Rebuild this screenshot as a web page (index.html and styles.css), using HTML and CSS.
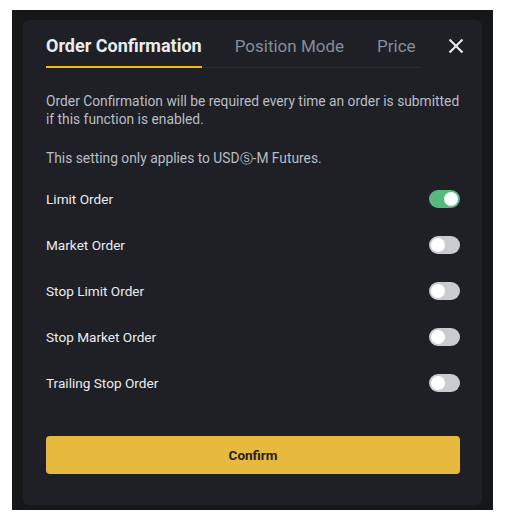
FILE: index.html
```html
<!DOCTYPE html>
<html>
<head>
<meta charset="utf-8">
<link rel="stylesheet" href="styles.css">
</head>
<body>
<div class="backdrop">
  <div class="modal">
    <div class="header">
      <div class="tabs">
        <div class="tab active">Order Confirmation</div>
        <div class="tab">Position Mode</div>
        <div class="tab">Price</div>
      </div>
      <button class="close" aria-label="Close">
        <svg width="16" height="16" viewBox="0 0 16 16"><path d="M1.5 1.5L14.5 14.5M14.5 1.5L1.5 14.5" stroke="#eaecef" stroke-width="2" fill="none"/></svg>
      </button>
    </div>
    <p class="desc first">Order Confirmation will be required every time an order is submitted if this function is enabled.</p>
    <p class="desc second">This setting only applies to USD<span class="circ">Ⓢ</span>-M Futures.</p>
    <div class="rows">
      <div class="row"><span>Limit Order</span><span class="toggle on"></span></div>
      <div class="row"><span>Market Order</span><span class="toggle"></span></div>
      <div class="row"><span>Stop Limit Order</span><span class="toggle"></span></div>
      <div class="row"><span>Stop Market Order</span><span class="toggle"></span></div>
      <div class="row"><span>Trailing Stop Order</span><span class="toggle"></span></div>
    </div>
    <button class="confirm">Confirm</button>
  </div>
</div>
</body>
</html>
```
FILE: styles.css
```css
* { box-sizing: border-box; }
html, body { margin: 0; padding: 0; background: #ffffff; }
body { font-family: Roboto, "Noto Sans", sans-serif; }
.backdrop {
  margin: 10px 0 0 12px;
  width: 481px;
  height: 500px;
  background: #161719;
  padding: 10px 0 0 11px;
}
.modal {
  width: 459px;
  height: 485px;
  background: #1f2025;
  border-radius: 6px;
  padding: 14px 22px 0 23px;
}
.header {
  display: flex;
  align-items: flex-start;
}
.tabs {
  display: flex;
  gap: 33px;
  width: 374px;
  overflow: hidden;
  white-space: nowrap;
  box-shadow: inset 0 -1px 0 #2b2e35;
}
.tab {
  font-size: 17px;
  line-height: 24px;
  color: #848e9c;
  padding-bottom: 8px;
  border-bottom: 2px solid transparent;
}
.tab.active {
  font-size: 18px;
  color: #eaecef;
  font-weight: 700;
  border-bottom-color: #f0b90b;
}
.close {
  margin-left: auto;
  margin-right: -8px;
  margin-top: 0;
  width: 24px;
  height: 24px;
  padding: 0;
  border: 0;
  background: transparent;
  display: flex;
  align-items: center;
  justify-content: center;
}
.desc {
  margin: 0;
  height: auto;
  font-size: 13.8px;
  line-height: 18px;
  color: #b7bdc6;
}
.circ { font-size: 12.5px; line-height: 0; }
.desc.first { margin-top: 24px; }
.desc.second { margin-top: 21px; height: 18px; }
.rows { margin-top: 9px; }
.row {
  height: 46px;
  display: flex;
  align-items: center;
  justify-content: space-between;
  font-size: 13.6px;
  color: #eaecef;
}
.toggle {
  position: relative;
  width: 31px;
  height: 18px;
  border-radius: 9px;
  background: #c9cbcf;
}
.toggle::after {
  content: "";
  position: absolute;
  top: 2px;
  left: 2px;
  width: 14px;
  height: 14px;
  border-radius: 50%;
  background: #ffffff;
}
.toggle.on { background: #58b97f; }
.toggle.on::after { left: 15px; }
.confirm {
  display: block;
  width: 414px;
  height: 38px;
  margin-top: 30px;
  border: 0;
  border-radius: 4px;
  background: #e8b93f;
  color: #1e2026;
  font-family: Roboto, "Noto Sans", sans-serif;
  font-weight: 700;
  font-size: 13.5px;
}
```
